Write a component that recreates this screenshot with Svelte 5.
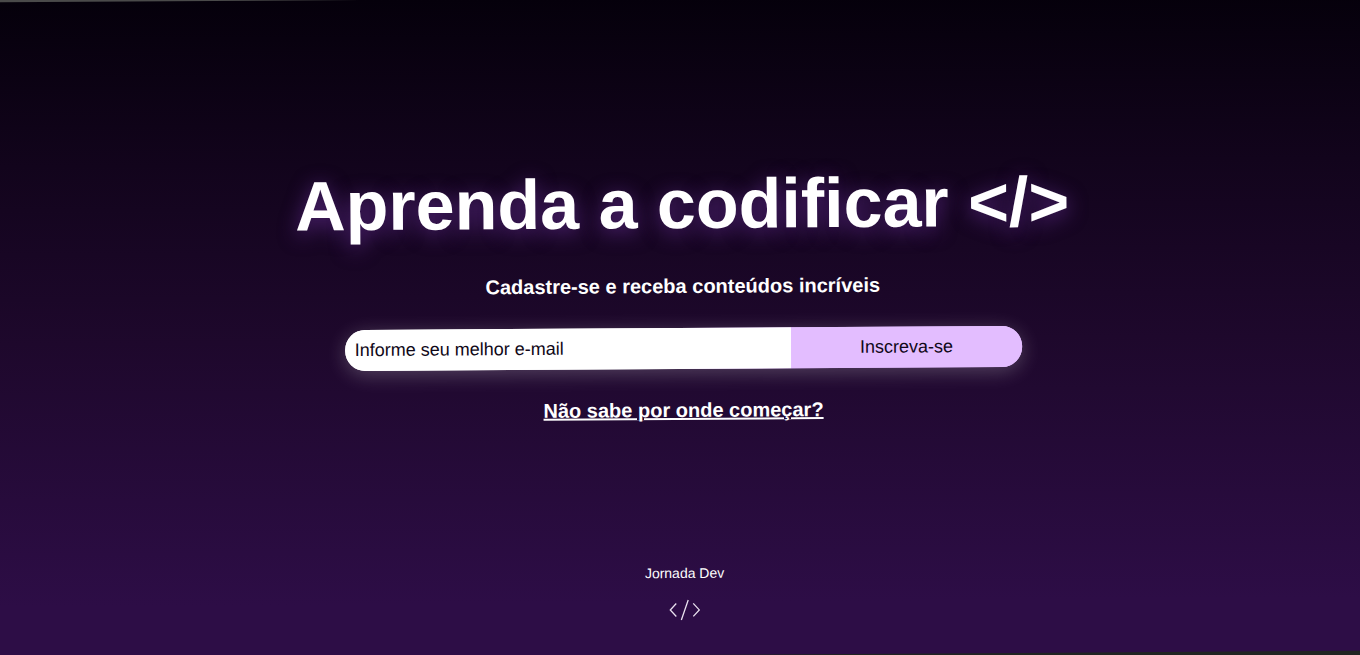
<script>
  let email = $state('');
</script>

<div class="viewport">
  <div class="page">
    <main>
      <h1>Aprenda a codificar &lt;/&gt;</h1>
      <h2>Cadastre-se e receba conteúdos incríveis</h2>
      <form onsubmit={(event) => event.preventDefault()}>
        <input type="email" aria-label="Informe seu melhor e-mail" placeholder="Informe seu melhor e-mail" bind:value={email} />
        <button type="submit">Inscreva-se</button>
      </form>
      <a href="#comecar">Não sabe por onde começar?</a>
    </main>
    <footer>
      <p>Jornada Dev</p>
      <svg width="32" height="22" viewBox="0 0 32 22" aria-hidden="true">
        <path d="M7.5 4.500 1.500 11l6 6.500M24.500 4.500l6 6.500-6 6.500M19.500 1l-7 20" />
      </svg>
    </footer>
  </div>
</div>

<style>
  :global(body) {
    margin: 0;
    background: #202422;
  }

  .viewport {
    min-height: 100vh;
    display: flex;
    overflow: hidden;
    background: linear-gradient(#4a4a4a 50%, #202422 50%);
  }

  .page {
    flex: 1;
    display: flex;
    flex-direction: column;
    box-sizing: border-box;
    margin: -2px -8px 0;
    padding: 0 8px 0 14px;
    transform: rotate(-0.36deg);
    background: linear-gradient(#05000b, #12041c 25%, #1e082c 52%, #2d0d46 92%);
    color: #fff;
    font-family: "Liberation Sans", Arial, sans-serif;
  }

  main {
    flex: 1;
    display: flex;
    flex-direction: column;
    align-items: center;
    justify-content: center;
    padding-top: 22px;
  }

  h1 {
    margin: 0;
    font-size: 70px;
    line-height: 84px;
    text-align: center;
    text-shadow: 0 4px 20px #55267c;
  }

  h2 {
    margin: 28px 0 30px;
    font-size: 20px;
    line-height: 24px;
    text-align: center;
  }

  form {
    display: flex;
    width: 50%;
    min-width: 300px;
    border-radius: 20px;
    background: linear-gradient(to right, #fff 50%, #e3bdff 50%);
    box-shadow: 0 4px 20px rgba(255, 255, 255, 0.24);
  }

  input,
  button {
    box-sizing: border-box;
    height: 41px;
    border: 0;
    color: #100818;
    font-family: inherit;
    font-size: 18px;
  }

  input {
    flex: 1;
    min-width: 0;
    padding: 0 10px;
    border-radius: 20px 0 0 20px;
    background: #fff;
    outline: none;
  }

  input::placeholder {
    color: #100818;
    opacity: 1;
  }

  button {
    width: 34%;
    border-radius: 0 20px 20px 0;
    background: #e3bdff;
    cursor: pointer;
  }

  a {
    margin-top: 29px;
    color: #fff;
    font-size: 20px;
    font-weight: bold;
    line-height: 24px;
  }

  footer {
    display: flex;
    flex-direction: column;
    align-items: center;
    gap: 16px;
    padding-bottom: 34px;
  }

  footer p {
    margin: 0;
    font-size: 14px;
    line-height: 20px;
  }

  svg {
    fill: none;
    stroke: #e8e0ee;
    stroke-width: 1.3;
  }
</style>
